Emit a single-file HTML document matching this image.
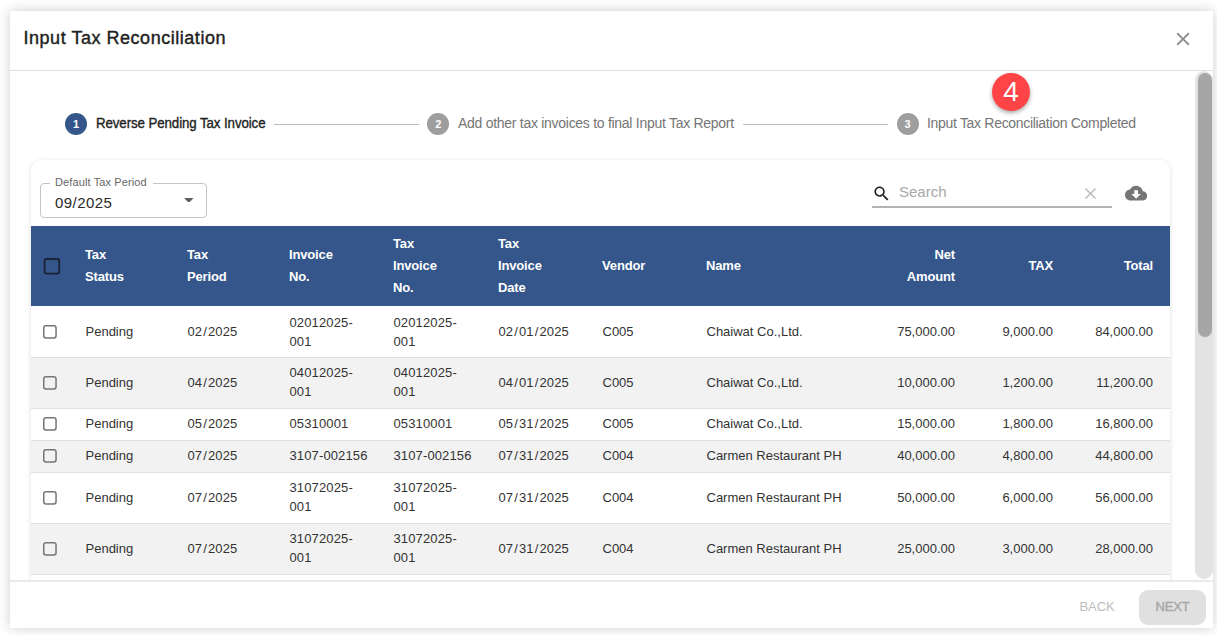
<!DOCTYPE html>
<html><head><meta charset="utf-8">
<style>
*{box-sizing:border-box;margin:0;padding:0}
html,body{width:1217px;height:635px;overflow:hidden;background:#fff;font-family:"Liberation Sans",sans-serif;}
.a{position:absolute;white-space:nowrap}
#dlg{position:absolute;left:10px;top:11px;width:1203px;height:617px;background:#fff;
box-shadow:0 0 12px rgba(0,0,0,0.2);}
.hline{position:absolute;height:1px;background:#e0e0e0}
.step{position:absolute;width:22px;height:22px;border-radius:50%;color:#fff;font-size:11px;font-weight:bold;text-align:center;line-height:23.5px}
.slab{position:absolute;font-size:14px;line-height:16px;white-space:nowrap}
.conn{position:absolute;height:1px;background:#bdbdbd}
#card{position:absolute;left:31px;top:160px;width:1139px;height:440px;background:#fff;border-radius:10px;
box-shadow:0 1px 5px rgba(0,0,0,0.13)}
#hdr{position:absolute;left:31px;top:226px;width:1139px;height:80px;background:#34568a}
.th{position:absolute;color:#fff;font-weight:bold;font-size:13px;letter-spacing:-0.15px;line-height:22px;white-space:nowrap;top:226px;height:80px;display:flex;align-items:center}
.th.tr{text-align:right;justify-content:flex-end}
.row{position:absolute;left:31px;width:1139px}
.line{position:absolute;left:31px;width:1139px;height:1px;background:#e0e0e0}
.td{position:absolute;color:#333;font-size:13px;line-height:19px;white-space:nowrap;display:flex;align-items:center}
.td.tr{text-align:right;justify-content:flex-end}
.cb{position:absolute;left:41px;width:18px;height:18px}
.num{letter-spacing:0.13px}
.sl{margin:0 1px}

</style></head>
<body>
<div id="dlg"></div>
<!-- title -->
<div class="a" style="left:23.5px;top:28px;font-size:18px;line-height:20px;color:#212121;letter-spacing:0.53px;-webkit-text-stroke:0.4px #212121">Input Tax Reconciliation</div>
<div class="hline" style="left:10px;top:70px;width:1203px"></div>
<!-- close -->
<svg class="a" style="left:1171.7px;top:28px" width="22" height="22" viewBox="0 0 24 24"><path fill="#8c8c8c" d="M19 6.41 17.59 5 12 10.59 6.41 5 5 6.41 10.59 12 5 17.59 6.41 19 12 13.41 17.59 19 19 17.59 13.41 12z"/></svg>

<!-- stepper -->
<div class="step" style="left:65px;top:112.7px;background:#34568a">1</div>
<div class="slab" style="left:96px;top:115px;color:#212121;letter-spacing:-0.1px;-webkit-text-stroke:0.35px #212121;transform:scaleX(0.95);transform-origin:0 0">Reverse Pending Tax Invoice</div>
<div class="conn" style="left:274px;top:124px;width:145px"></div>
<div class="step" style="left:427.2px;top:112.7px;background:#9e9e9e">2</div>
<div class="slab" style="left:458px;top:115px;color:#757575;letter-spacing:-0.28px">Add other tax invoices to final Input Tax Report</div>
<div class="conn" style="left:743px;top:124px;width:145px"></div>
<div class="step" style="left:896.5px;top:112.7px;background:#9e9e9e">3</div>
<div class="slab" style="left:927px;top:115px;color:#757575;letter-spacing:-0.31px">Input Tax Reconciliation Completed</div>

<!-- card -->
<div id="card"></div>

<!-- select -->
<div class="a" style="left:40px;top:183px;width:167px;height:35px;border:1px solid #c4c4c4;border-radius:4px"></div>
<div class="a" style="left:50px;top:176px;width:103px;height:12px;background:#fff"></div>
<div class="a" style="left:55px;top:176px;font-size:11px;line-height:13px;color:#666;letter-spacing:0.12px">Default Tax Period</div>
<div class="a" style="left:55px;top:194.4px;font-size:15px;line-height:17px;color:#2a2a2a;letter-spacing:0.45px">09/2025</div>
<svg class="a" style="left:184.2px;top:197.7px" width="9.6" height="4.8" viewBox="0 0 10 5"><path d="M0 0h10L5 5z" fill="#5f5f5f"/></svg>

<!-- search -->
<svg class="a" style="left:871.6px;top:184.3px" width="19.2" height="19.2" viewBox="0 0 24 24"><path fill="#212121" d="M15.5 14h-.79l-.28-.27C15.41 12.59 16 11.11 16 9.5 16 5.91 13.09 3 9.5 3S3 5.91 3 9.5 5.91 16 9.5 16c1.61 0 3.09-.59 4.23-1.57l.27.28v.79l5 4.99L20.49 19l-4.99-5zm-6 0C7.01 14 5 11.99 5 9.5S7.01 5 9.5 5 14 7.01 14 9.5 11.99 14 9.5 14z"/></svg>
<div class="a" style="left:899px;top:183px;font-size:15px;line-height:17px;color:#a8a8a8">Search</div>
<svg class="a" style="left:1080.8px;top:184.2px" width="19" height="19" viewBox="0 0 24 24"><path fill="#bdbdbd" d="M19 6.41 17.59 5 12 10.59 6.41 5 5 6.41 10.59 12 5 17.59 6.41 19 12 13.41 17.59 19 19 17.59 13.41 12z"/></svg>
<div class="a" style="left:872px;top:206px;width:240px;height:2px;background:#b3b3b3"></div>
<svg class="a" style="left:1124.7px;top:181.9px" width="22.2" height="22.2" viewBox="0 0 24 24"><path fill="#757575" d="M19.35 10.04C18.67 6.59 15.64 4 12 4 9.11 4 6.6 5.64 5.35 8.04 2.34 8.36 0 10.91 0 14c0 3.31 2.69 6 6 6h13c2.76 0 5-2.24 5-5 0-2.64-2.05-4.78-4.65-4.96zM17 13l-5 5-5-5h3V9h4v4h3z"/></svg>

<div class="row" style="top:306px;height:51px;background:#fff"></div>
<div class="line" style="top:357px"></div>
<svg class="cb" style="top:323.3px" width="18" height="18"><rect x="2.75" y="2.75" width="12.3" height="12.3" rx="2.2" fill="none" stroke="#757575" stroke-width="1.5"/></svg>
<div class="td" style="left:85.5px;top:306px;height:51px">Pending</div>
<div class="td" style="left:187.5px;top:306px;height:51px"><span class="num">02<span class="sl">/</span>2025</span></div>
<div class="td" style="left:289.5px;top:306px;height:51px"><span class="num">02012025-<br>001</span></div>
<div class="td" style="left:393.5px;top:306px;height:51px"><span class="num">02012025-<br>001</span></div>
<div class="td" style="left:498.5px;top:306px;height:51px"><span class="num">02<span class="sl">/</span>01<span class="sl">/</span>2025</span></div>
<div class="td" style="left:602.5px;top:306px;height:51px">C005</div>
<div class="td" style="left:706.5px;top:306px;height:51px">Chaiwat Co.,Ltd.</div>
<div class="td tr" style="right:262px;top:306px;height:51px">75,000.00</div>
<div class="td tr" style="right:164px;top:306px;height:51px">9,000.00</div>
<div class="td tr" style="right:64px;top:306px;height:51px">84,000.00</div>
<div class="row" style="top:358px;height:50px;background:#f2f2f2"></div>
<div class="line" style="top:408px"></div>
<svg class="cb" style="top:373.8px" width="18" height="18"><rect x="2.75" y="2.75" width="12.3" height="12.3" rx="2.2" fill="none" stroke="#757575" stroke-width="1.5"/></svg>
<div class="td" style="left:85.5px;top:357px;height:50px">Pending</div>
<div class="td" style="left:187.5px;top:357px;height:50px"><span class="num">04<span class="sl">/</span>2025</span></div>
<div class="td" style="left:289.5px;top:357px;height:50px"><span class="num">04012025-<br>001</span></div>
<div class="td" style="left:393.5px;top:357px;height:50px"><span class="num">04012025-<br>001</span></div>
<div class="td" style="left:498.5px;top:357px;height:50px"><span class="num">04<span class="sl">/</span>01<span class="sl">/</span>2025</span></div>
<div class="td" style="left:602.5px;top:357px;height:50px">C005</div>
<div class="td" style="left:706.5px;top:357px;height:50px">Chaiwat Co.,Ltd.</div>
<div class="td tr" style="right:262px;top:357px;height:50px">10,000.00</div>
<div class="td tr" style="right:164px;top:357px;height:50px">1,200.00</div>
<div class="td tr" style="right:64px;top:357px;height:50px">11,200.00</div>
<div class="row" style="top:409px;height:31px;background:#fff"></div>
<div class="line" style="top:440px"></div>
<svg class="cb" style="top:415.3px" width="18" height="18"><rect x="2.75" y="2.75" width="12.3" height="12.3" rx="2.2" fill="none" stroke="#757575" stroke-width="1.5"/></svg>
<div class="td" style="left:85.5px;top:408px;height:31px">Pending</div>
<div class="td" style="left:187.5px;top:408px;height:31px"><span class="num">05<span class="sl">/</span>2025</span></div>
<div class="td" style="left:289.5px;top:408px;height:31px"><span class="num">05310001</span></div>
<div class="td" style="left:393.5px;top:408px;height:31px"><span class="num">05310001</span></div>
<div class="td" style="left:498.5px;top:408px;height:31px"><span class="num">05<span class="sl">/</span>31<span class="sl">/</span>2025</span></div>
<div class="td" style="left:602.5px;top:408px;height:31px">C005</div>
<div class="td" style="left:706.5px;top:408px;height:31px">Chaiwat Co.,Ltd.</div>
<div class="td tr" style="right:262px;top:408px;height:31px">15,000.00</div>
<div class="td tr" style="right:164px;top:408px;height:31px">1,800.00</div>
<div class="td tr" style="right:64px;top:408px;height:31px">16,800.00</div>
<div class="row" style="top:441px;height:31px;background:#f2f2f2"></div>
<div class="line" style="top:472px"></div>
<svg class="cb" style="top:447.3px" width="18" height="18"><rect x="2.75" y="2.75" width="12.3" height="12.3" rx="2.2" fill="none" stroke="#757575" stroke-width="1.5"/></svg>
<div class="td" style="left:85.5px;top:440px;height:31px">Pending</div>
<div class="td" style="left:187.5px;top:440px;height:31px"><span class="num">07<span class="sl">/</span>2025</span></div>
<div class="td" style="left:289.5px;top:440px;height:31px"><span class="num">3107-002156</span></div>
<div class="td" style="left:393.5px;top:440px;height:31px"><span class="num">3107-002156</span></div>
<div class="td" style="left:498.5px;top:440px;height:31px"><span class="num">07<span class="sl">/</span>31<span class="sl">/</span>2025</span></div>
<div class="td" style="left:602.5px;top:440px;height:31px">C004</div>
<div class="td" style="left:706.5px;top:440px;height:31px">Carmen Restaurant PH</div>
<div class="td tr" style="right:262px;top:440px;height:31px">40,000.00</div>
<div class="td tr" style="right:164px;top:440px;height:31px">4,800.00</div>
<div class="td tr" style="right:64px;top:440px;height:31px">44,800.00</div>
<div class="row" style="top:473px;height:50px;background:#fff"></div>
<div class="line" style="top:523px"></div>
<svg class="cb" style="top:488.8px" width="18" height="18"><rect x="2.75" y="2.75" width="12.3" height="12.3" rx="2.2" fill="none" stroke="#757575" stroke-width="1.5"/></svg>
<div class="td" style="left:85.5px;top:472px;height:50px">Pending</div>
<div class="td" style="left:187.5px;top:472px;height:50px"><span class="num">07<span class="sl">/</span>2025</span></div>
<div class="td" style="left:289.5px;top:472px;height:50px"><span class="num">31072025-<br>001</span></div>
<div class="td" style="left:393.5px;top:472px;height:50px"><span class="num">31072025-<br>001</span></div>
<div class="td" style="left:498.5px;top:472px;height:50px"><span class="num">07<span class="sl">/</span>31<span class="sl">/</span>2025</span></div>
<div class="td" style="left:602.5px;top:472px;height:50px">C004</div>
<div class="td" style="left:706.5px;top:472px;height:50px">Carmen Restaurant PH</div>
<div class="td tr" style="right:262px;top:472px;height:50px">50,000.00</div>
<div class="td tr" style="right:164px;top:472px;height:50px">6,000.00</div>
<div class="td tr" style="right:64px;top:472px;height:50px">56,000.00</div>
<div class="row" style="top:524px;height:50px;background:#f2f2f2"></div>
<div class="line" style="top:574px"></div>
<svg class="cb" style="top:539.8px" width="18" height="18"><rect x="2.75" y="2.75" width="12.3" height="12.3" rx="2.2" fill="none" stroke="#757575" stroke-width="1.5"/></svg>
<div class="td" style="left:85.5px;top:523px;height:50px">Pending</div>
<div class="td" style="left:187.5px;top:523px;height:50px"><span class="num">07<span class="sl">/</span>2025</span></div>
<div class="td" style="left:289.5px;top:523px;height:50px"><span class="num">31072025-<br>001</span></div>
<div class="td" style="left:393.5px;top:523px;height:50px"><span class="num">31072025-<br>001</span></div>
<div class="td" style="left:498.5px;top:523px;height:50px"><span class="num">07<span class="sl">/</span>31<span class="sl">/</span>2025</span></div>
<div class="td" style="left:602.5px;top:523px;height:50px">C004</div>
<div class="td" style="left:706.5px;top:523px;height:50px">Carmen Restaurant PH</div>
<div class="td tr" style="right:262px;top:523px;height:50px">25,000.00</div>
<div class="td tr" style="right:164px;top:523px;height:50px">3,000.00</div>
<div class="td tr" style="right:64px;top:523px;height:50px">28,000.00</div>

<div class="a" style="left:31px;top:575px;width:1139px;height:6px;background:#fff"></div>

<div id="hdr"></div>
<svg class="a" style="left:40px;top:255px" width="24" height="24"><rect x="4.6" y="4" width="14.6" height="14.6" rx="2"  fill="none" stroke="#1b2338" stroke-width="1.9"/></svg>
<div class="th" style="left:85px">Tax<br>Status</div>
<div class="th" style="left:187px">Tax<br>Period</div>
<div class="th" style="left:289px">Invoice<br>No.</div>
<div class="th" style="left:393px">Tax<br>Invoice<br>No.</div>
<div class="th" style="left:498px">Tax<br>Invoice<br>Date</div>
<div class="th" style="left:602px">Vendor</div>
<div class="th" style="left:706px">Name</div>
<div class="th tr" style="right:262px">Net<br>Amount</div>
<div class="th tr" style="right:164px">TAX</div>
<div class="th tr" style="right:64px">Total</div>

<!-- footer -->
<div class="a" style="left:10px;top:580px;width:1203px;height:48px;background:#fff;border-top:2px solid #eaeaea"></div>
<div class="a" style="left:1079.5px;top:600px;font-size:13px;line-height:14px;color:#bdbdbd;letter-spacing:-0.1px">BACK</div>
<div class="a" style="left:1139px;top:590px;width:67px;height:35px;border-radius:9px;background:#e0e0e0"></div>
<div class="a" style="left:1155.5px;top:600px;font-size:13px;line-height:14px;color:#a6a6a6;letter-spacing:-0.2px;-webkit-text-stroke:0.35px #a6a6a6">NEXT</div>

<!-- scrollbar -->
<div class="a" style="left:1195px;top:71px;width:18px;height:508px;background:#e3e3e3;border-radius:9px"></div>
<div class="a" style="left:1198px;top:73px;width:14px;height:264px;background:#a6a6a6;border-radius:7px"></div>

<!-- badge -->
<div class="a" style="left:992px;top:73px;width:38px;height:38px;border-radius:50%;background:#ff4448;color:#fff;font-size:28px;line-height:38px;text-align:center;box-shadow:0 2px 4px rgba(0,0,0,0.35)">4</div>
</body></html>
